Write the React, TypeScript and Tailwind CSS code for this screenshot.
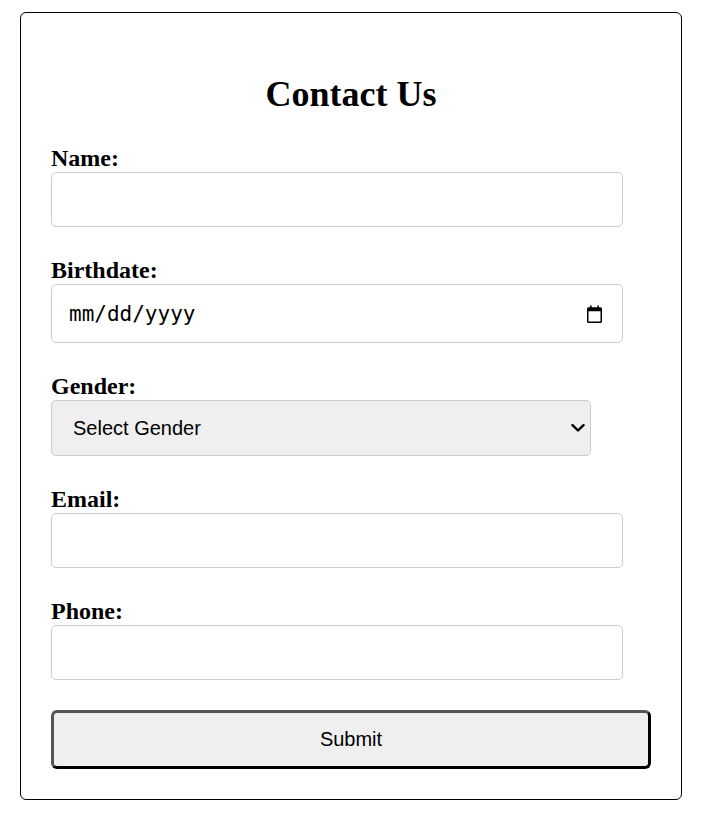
import React from "react";

const serif = { fontFamily: '"Liberation Serif", "Times New Roman", serif' };

function Label({ children }: { children: React.ReactNode }) {
  return (
    <label className="block text-[24px] leading-[23px] pb-[2px] font-bold text-black">
      {children}
    </label>
  );
}

function TextBox({ className = "" }: { className?: string }) {
  return (
    <div
      className={
        "w-[572px] h-[55px] border border-[#cccccc] rounded-[5px] bg-white " +
        className
      }
    />
  );
}

function CalendarIcon() {
  return (
    <svg width="15" height="18" viewBox="0 0 15 18" className="block">
      <path
        d="M3 0.5h1.6v1.8h5.8V0.5H12v1.8h1.5A1.5 1.5 0 0 1 15 3.8v12.7A1.5 1.5 0 0 1 13.5 18h-12A1.5 1.5 0 0 1 0 16.5V3.8A1.5 1.5 0 0 1 1.5 2.3H3zM1.5 6.3v10.2h12V6.3z"
        fill="#000"
        fillRule="evenodd"
      />
    </svg>
  );
}

function Chevron() {
  return (
    <svg width="14" height="10" viewBox="0 0 14 10" className="block">
      <path
        d="M1.5 2.2L7 7.5l5.5-5.3"
        fill="none"
        stroke="#000"
        strokeWidth="2.4"
        strokeLinecap="round"
        strokeLinejoin="round"
      />
    </svg>
  );
}

export default function App() {
  return (
    <div className="bg-white min-h-[824px] pt-[12px] pl-[20px]" style={serif}>
      <div className="w-[662px] border border-black rounded-[6px] pt-[61px] px-[30px] pb-[30px]">
        <h1 className="text-center text-[36px] leading-[41px] font-bold text-black">
          Contact Us
        </h1>
        <form className="mt-[32px]" onSubmit={(e) => e.preventDefault()}>
          <Label>Name:</Label>
          <TextBox className="mb-[32px]" />

          <Label>Birthdate:</Label>
          <div className="w-[572px] h-[59px] border border-[#cccccc] rounded-[5px] bg-white flex items-center pl-[17px] pr-[20px] mb-[32px]">
            <span
              className="text-[21px] text-black flex-1 pt-[2px]"
              style={{ fontFamily: '"DejaVu Sans Mono", "Liberation Mono", monospace' }}
            >
              mm/dd/yyyy
            </span>
            <CalendarIcon />
          </div>

          <Label>Gender:</Label>
          <div
            className="w-[540px] h-[56px] border border-[#cccccc] rounded-[5px] bg-[#efefef] flex items-center pl-[21px] pr-[5px] mb-[32px]"
            style={{ fontFamily: '"Liberation Sans", Arial, sans-serif' }}
          >
            <span className="text-[20px] text-black flex-1">Select Gender</span>
            <Chevron />
          </div>

          <Label>Email:</Label>
          <TextBox className="mb-[32px]" />

          <Label>Phone:</Label>
          <TextBox />

          <button
            type="submit"
            className="mt-[30px] w-[600px] h-[59px] pb-[2px] bg-[#efefef] rounded-[6px] border-[3px] border-t-[#555555] border-l-[#555555] border-b-black border-r-black text-[20px] text-black flex items-center justify-center"
            style={{ fontFamily: '"Liberation Sans", Arial, sans-serif' }}
          >
            Submit
          </button>
        </form>
      </div>
    </div>
  );
}
